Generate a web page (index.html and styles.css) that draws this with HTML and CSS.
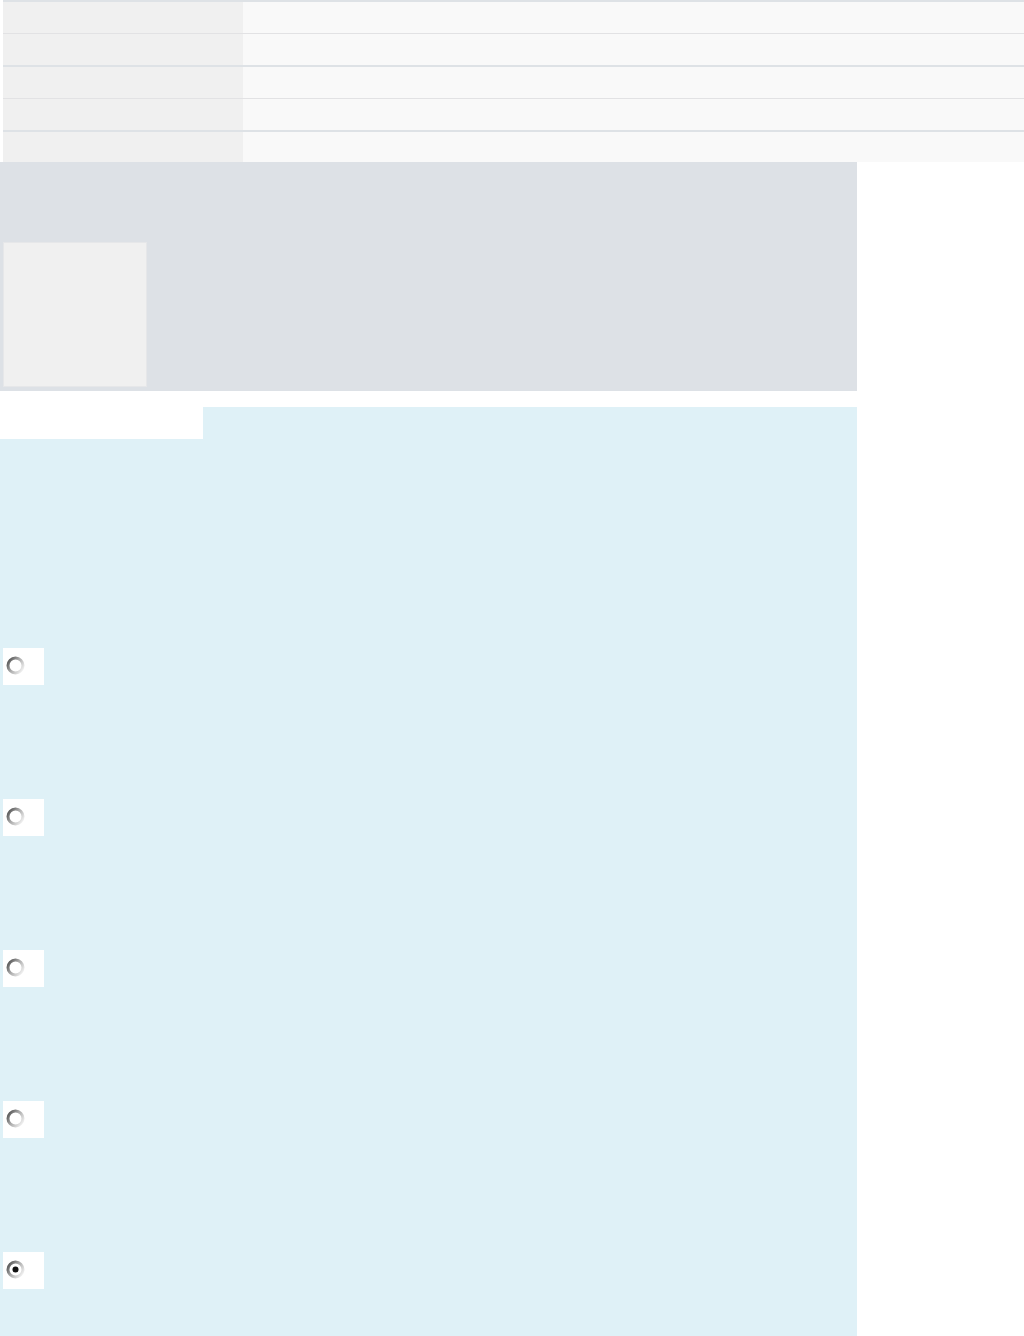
FILE: index.html
```html
<!DOCTYPE html>
<html lang="en">
<head>
    <meta charset="UTF-8">
    <meta name="viewport" content="width=device-width, initial-scale=1.0">
    <title>Question</title>
    <link rel="stylesheet" href="styles.css">
</head>
<body>

<table class="info">
    <tbody>
        <tr><th></th><td></td></tr>
        <tr><th></th><td></td></tr>
        <tr class="thick"><th></th><td></td></tr>
        <tr><th></th><td></td></tr>
        <tr class="thick last"><th></th><td></td></tr>
    </tbody>
</table>

<div class="question">
    <div class="figure"></div>
</div>

<div class="answers">
    <div class="answers-tab"></div>
    <div class="answers-body">
        <label class="option">
            <svg class="radio" width="19" height="19" viewBox="0 0 19 19">
                <defs>
                    <linearGradient id="ring" x1="0" y1="0.15" x2="1" y2="0.85">
                        <stop offset="0" stop-color="#555"/>
                        <stop offset="0.45" stop-color="#aaa"/>
                        <stop offset="1" stop-color="#f4f4f4"/>
                    </linearGradient>
                </defs>
                <circle cx="9.5" cy="9.5" r="7.5" fill="#fff" stroke="url(#ring)" stroke-width="3"/>
            </svg>
        </label>
        <label class="option">
            <svg class="radio" width="19" height="19" viewBox="0 0 19 19">
                <circle cx="9.5" cy="9.5" r="7.5" fill="#fff" stroke="url(#ring)" stroke-width="3"/>
            </svg>
        </label>
        <label class="option">
            <svg class="radio" width="19" height="19" viewBox="0 0 19 19">
                <circle cx="9.5" cy="9.5" r="7.5" fill="#fff" stroke="url(#ring)" stroke-width="3"/>
            </svg>
        </label>
        <label class="option">
            <svg class="radio" width="19" height="19" viewBox="0 0 19 19">
                <circle cx="9.5" cy="9.5" r="7.5" fill="#fff" stroke="url(#ring)" stroke-width="3"/>
            </svg>
        </label>
        <label class="option">
            <svg class="radio" width="19" height="19" viewBox="0 0 19 19">
                <circle cx="9.5" cy="9.5" r="7.5" fill="#fff" stroke="url(#ring)" stroke-width="3"/>
                <circle cx="9.5" cy="9.5" r="3" fill="#111"/>
            </svg>
        </label>
    </div>
</div>

</body>
</html>
```

FILE: styles.css
```css
body {
    font-family: "Liberation Sans", Arial, sans-serif;
    margin: 0;
    background-color: #fff;
    overflow: hidden;
}
.info {
    border-collapse: collapse;
    margin-left: 3px;
    width: 1021px;
    border-top: 2px solid #dee2e6;
}
.info th,
.info td {
    height: 31px;
    padding: 0;
    border-top: 1px solid #e2e2e4;
}
.info tr:first-child th,
.info tr:first-child td {
    border-top: none;
}
.info tr.thick th,
.info tr.thick td {
    border-top: 2px solid #dee2e6;
}
.info tr.last th,
.info tr.last td {
    height: 30px;
}
.info th {
    width: 240px;
    background: #f0f0f0;
}
.info td {
    background: #f9f9f9;
}
.question {
    width: 857px;
    box-sizing: border-box;
    padding: 80px 0 4px 3px;
    background: #dde1e6;
}
.figure {
    width: 142px;
    height: 143px;
    background: #f0f0f0;
    border: 1px solid #e6e7e9;
}
.answers {
    width: 857px;
    margin-top: 16px;
}
.answers-tab {
    height: 32px;
    margin-left: 203px;
    background: #dff1f7;
}
.answers-body {
    display: flex;
    flex-direction: column;
    gap: 114px;
    min-height: 1000px;
    padding: 209px 0 0 3px;
    background: #dff1f7;
}
.option {
    display: block;
    width: 41px;
    height: 37px;
    background: #fff;
}
.radio {
    display: block;
    margin: 8px 0 0 3px;
}
```
